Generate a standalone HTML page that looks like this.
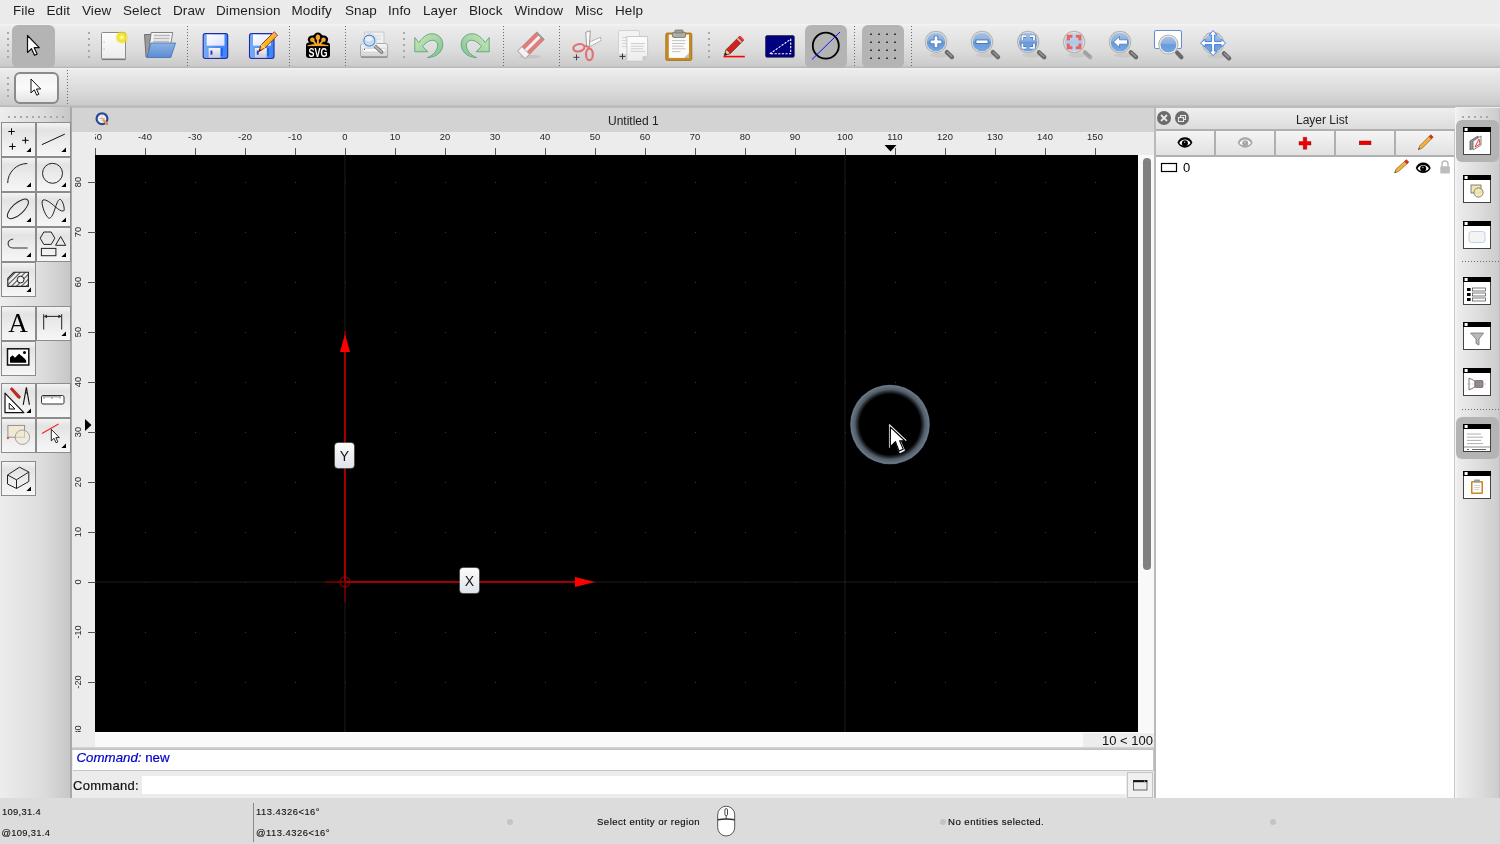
<!DOCTYPE html><html><head><meta charset="utf-8"><style>

*{box-sizing:border-box}
html,body{margin:0;padding:0}
body{width:1500px;height:844px;position:relative;overflow:hidden;background:#ececec;font-family:"Liberation Sans",sans-serif;color:#1d1d1d}
.a{position:absolute}
.t{position:absolute;white-space:nowrap;line-height:1}
svg{position:absolute;overflow:visible}
.sep{position:absolute;width:1px;background:repeating-linear-gradient(#6a6a6a 0 1px,transparent 1px 3px)}
.hdl{position:absolute;width:2px;background:repeating-linear-gradient(#a8a8a8 0 2px,transparent 2px 6px)}
.tb{position:absolute;width:35px;height:35px;border:1px solid #8c8c8c;background:linear-gradient(#f3f3f3 0%,#e3e3e3 22%,#ececec 55%,#f6f6f6 100%)}

</style></head><body><div class="a" style="left:0;top:0;width:1500px;height:844px;overflow:hidden;will-change:transform">
<div class="a" style="left:0;top:0;width:1500px;height:24px;background:#ebebeb"></div>
<div class="t" style="left:13px;top:3.5px;font-size:13.5px;letter-spacing:0.1px;color:#1e1e1e">File</div>
<div class="t" style="left:46.5px;top:3.5px;font-size:13.5px;letter-spacing:0.1px;color:#1e1e1e">Edit</div>
<div class="t" style="left:82px;top:3.5px;font-size:13.5px;letter-spacing:0.1px;color:#1e1e1e">View</div>
<div class="t" style="left:123px;top:3.5px;font-size:13.5px;letter-spacing:0.1px;color:#1e1e1e">Select</div>
<div class="t" style="left:173px;top:3.5px;font-size:13.5px;letter-spacing:0.1px;color:#1e1e1e">Draw</div>
<div class="t" style="left:216px;top:3.5px;font-size:13.5px;letter-spacing:0.1px;color:#1e1e1e">Dimension</div>
<div class="t" style="left:291.5px;top:3.5px;font-size:13.5px;letter-spacing:0.1px;color:#1e1e1e">Modify</div>
<div class="t" style="left:345px;top:3.5px;font-size:13.5px;letter-spacing:0.1px;color:#1e1e1e">Snap</div>
<div class="t" style="left:388px;top:3.5px;font-size:13.5px;letter-spacing:0.1px;color:#1e1e1e">Info</div>
<div class="t" style="left:423px;top:3.5px;font-size:13.5px;letter-spacing:0.1px;color:#1e1e1e">Layer</div>
<div class="t" style="left:469px;top:3.5px;font-size:13.5px;letter-spacing:0.1px;color:#1e1e1e">Block</div>
<div class="t" style="left:514.5px;top:3.5px;font-size:13.5px;letter-spacing:0.1px;color:#1e1e1e">Window</div>
<div class="t" style="left:575px;top:3.5px;font-size:13.5px;letter-spacing:0.1px;color:#1e1e1e">Misc</div>
<div class="t" style="left:615px;top:3.5px;font-size:13.5px;letter-spacing:0.1px;color:#1e1e1e">Help</div>
<div class="a" style="left:0;top:24px;width:1500px;height:44px;background:linear-gradient(#f4f4f4 0px,#ededed 2px,#dcdcdc 26px,#cbcbcb 42px,#b8b8b8 43px,#b8b8b8 44px)"></div>
<div class="a" style="left:0;top:68px;width:1500px;height:39px;background:linear-gradient(#f2f2f2 0px,#ececec 2px,#dbdbdb 22px,#cacaca 37px,#b8b8b8 38px,#b8b8b8 39px)"></div>
<div class="hdl" style="left:7px;top:32px;height:26px"></div>
<div class="hdl" style="left:88px;top:32px;height:26px"></div>
<div class="hdl" style="left:403px;top:32px;height:26px"></div>
<div class="hdl" style="left:708px;top:32px;height:26px"></div>
<div class="hdl" style="left:7px;top:77px;height:21px"></div>
<div class="sep" style="left:187px;top:26px;height:40px"></div>
<div class="sep" style="left:289px;top:26px;height:40px"></div>
<div class="sep" style="left:345px;top:26px;height:40px"></div>
<div class="sep" style="left:503px;top:26px;height:40px"></div>
<div class="sep" style="left:559px;top:26px;height:40px"></div>
<div class="sep" style="left:854px;top:26px;height:40px"></div>
<div class="sep" style="left:911px;top:26px;height:40px"></div>
<div class="sep" style="left:67px;top:70px;height:35px"></div>
<div class="a" style="left:12px;top:25px;width:43px;height:43px;border-radius:6px;background:#b4b4b4"></div>
<div class="a" style="left:805px;top:25px;width:42px;height:43px;border-radius:6px;background:#b4b4b4"></div>
<div class="a" style="left:862px;top:25px;width:42px;height:43px;border-radius:6px;background:#b4b4b4"></div>
<div class="a" style="left:14px;top:72px;width:45px;height:32px;border-radius:6px;border:2px solid #8a8a8a;background:linear-gradient(#f4f4f4,#fafafa 50%,#e4e4e4)"></div>
<div class="a" style="left:0;top:107px;width:71px;height:691px;background:linear-gradient(90deg,#ededed,#dcdcdc 60%,#c6c6c6)"></div>
<div class="a" style="left:70px;top:107px;width:2px;height:691px;background:#a9a9a9"></div>
<div class="a" style="left:8px;top:116px;width:58px;height:2px;background:repeating-linear-gradient(90deg,#a8a8a8 0 2px,transparent 2px 6px)"></div>
<div class="tb" style="left:1px;top:122px"></div>
<div class="tb" style="left:36px;top:122px"></div>
<div class="tb" style="left:1px;top:157px"></div>
<div class="tb" style="left:36px;top:157px"></div>
<div class="tb" style="left:1px;top:192px"></div>
<div class="tb" style="left:36px;top:192px"></div>
<div class="tb" style="left:1px;top:227px"></div>
<div class="tb" style="left:36px;top:227px"></div>
<div class="tb" style="left:1px;top:262px"></div>
<div class="tb" style="left:1px;top:306px"></div>
<div class="tb" style="left:36px;top:306px"></div>
<div class="tb" style="left:1px;top:341px"></div>
<div class="tb" style="left:1px;top:383px"></div>
<div class="tb" style="left:36px;top:383px"></div>
<div class="tb" style="left:1px;top:418px"></div>
<div class="tb" style="left:36px;top:418px"></div>
<div class="tb" style="left:1px;top:461px"></div>
<div class="a" style="left:72px;top:107px;width:1083px;height:1px;background:#bdbdbd"></div>
<div class="a" style="left:72px;top:108px;width:1082px;height:24px;background:#d3d3d3"></div>
<div class="t" style="left:608px;top:115px;font-size:12px;color:#222">Untitled 1</div>
<svg style="left:0;top:0" width="1500" height="844"><circle cx="102" cy="118.7" r="5.4" fill="#f4f4f8" stroke="#2a4a98" stroke-width="2.2"/><path d="M99,118.5h6M102,115.5v6" stroke="#c8a0a0" stroke-width="0.7"/><line x1="103" y1="119.5" x2="106.6" y2="123.4" stroke="#f0a020" stroke-width="2.2"/><line x1="106.6" y1="123.4" x2="107.7" y2="124.6" stroke="#e06060" stroke-width="2.2"/></svg>
<div class="a" style="left:72px;top:132px;width:1082px;height:23px;background:#ececec"></div>
<div class="a" style="left:72px;top:155px;width:23px;height:592px;background:#ececec"></div>
<div class="a" style="left:95px;top:155px;width:1059px;height:592px;background:#f9f9f9"></div>
<div class="a" style="left:95px;top:155px;width:1043px;height:577px;background:#000"></div>
<div class="a" style="left:1143px;top:158px;width:8px;height:412px;border-radius:4px;background:#808080"></div>
<div class="a" style="left:95px;top:132px;width:1059px;height:23px;overflow:hidden"><div class="a" style="left:-95px;top:-132px;width:1500px;height:200px"><div class="a" style="left:95px;top:148px;width:1px;height:7px;background:#555"></div><div class="t" style="left:75px;width:40px;text-align:center;top:132px;font-size:9.4px;letter-spacing:0.15px;color:#222">-50</div><div class="a" style="left:145px;top:148px;width:1px;height:7px;background:#555"></div><div class="t" style="left:125px;width:40px;text-align:center;top:132px;font-size:9.4px;letter-spacing:0.15px;color:#222">-40</div><div class="a" style="left:195px;top:148px;width:1px;height:7px;background:#555"></div><div class="t" style="left:175px;width:40px;text-align:center;top:132px;font-size:9.4px;letter-spacing:0.15px;color:#222">-30</div><div class="a" style="left:245px;top:148px;width:1px;height:7px;background:#555"></div><div class="t" style="left:225px;width:40px;text-align:center;top:132px;font-size:9.4px;letter-spacing:0.15px;color:#222">-20</div><div class="a" style="left:295px;top:148px;width:1px;height:7px;background:#555"></div><div class="t" style="left:275px;width:40px;text-align:center;top:132px;font-size:9.4px;letter-spacing:0.15px;color:#222">-10</div><div class="a" style="left:345px;top:148px;width:1px;height:7px;background:#555"></div><div class="t" style="left:325px;width:40px;text-align:center;top:132px;font-size:9.4px;letter-spacing:0.15px;color:#222">0</div><div class="a" style="left:395px;top:148px;width:1px;height:7px;background:#555"></div><div class="t" style="left:375px;width:40px;text-align:center;top:132px;font-size:9.4px;letter-spacing:0.15px;color:#222">10</div><div class="a" style="left:445px;top:148px;width:1px;height:7px;background:#555"></div><div class="t" style="left:425px;width:40px;text-align:center;top:132px;font-size:9.4px;letter-spacing:0.15px;color:#222">20</div><div class="a" style="left:495px;top:148px;width:1px;height:7px;background:#555"></div><div class="t" style="left:475px;width:40px;text-align:center;top:132px;font-size:9.4px;letter-spacing:0.15px;color:#222">30</div><div class="a" style="left:545px;top:148px;width:1px;height:7px;background:#555"></div><div class="t" style="left:525px;width:40px;text-align:center;top:132px;font-size:9.4px;letter-spacing:0.15px;color:#222">40</div><div class="a" style="left:595px;top:148px;width:1px;height:7px;background:#555"></div><div class="t" style="left:575px;width:40px;text-align:center;top:132px;font-size:9.4px;letter-spacing:0.15px;color:#222">50</div><div class="a" style="left:645px;top:148px;width:1px;height:7px;background:#555"></div><div class="t" style="left:625px;width:40px;text-align:center;top:132px;font-size:9.4px;letter-spacing:0.15px;color:#222">60</div><div class="a" style="left:695px;top:148px;width:1px;height:7px;background:#555"></div><div class="t" style="left:675px;width:40px;text-align:center;top:132px;font-size:9.4px;letter-spacing:0.15px;color:#222">70</div><div class="a" style="left:745px;top:148px;width:1px;height:7px;background:#555"></div><div class="t" style="left:725px;width:40px;text-align:center;top:132px;font-size:9.4px;letter-spacing:0.15px;color:#222">80</div><div class="a" style="left:795px;top:148px;width:1px;height:7px;background:#555"></div><div class="t" style="left:775px;width:40px;text-align:center;top:132px;font-size:9.4px;letter-spacing:0.15px;color:#222">90</div><div class="a" style="left:845px;top:148px;width:1px;height:7px;background:#555"></div><div class="t" style="left:825px;width:40px;text-align:center;top:132px;font-size:9.4px;letter-spacing:0.15px;color:#222">100</div><div class="a" style="left:895px;top:148px;width:1px;height:7px;background:#555"></div><div class="t" style="left:875px;width:40px;text-align:center;top:132px;font-size:9.4px;letter-spacing:0.15px;color:#222">110</div><div class="a" style="left:945px;top:148px;width:1px;height:7px;background:#555"></div><div class="t" style="left:925px;width:40px;text-align:center;top:132px;font-size:9.4px;letter-spacing:0.15px;color:#222">120</div><div class="a" style="left:995px;top:148px;width:1px;height:7px;background:#555"></div><div class="t" style="left:975px;width:40px;text-align:center;top:132px;font-size:9.4px;letter-spacing:0.15px;color:#222">130</div><div class="a" style="left:1045px;top:148px;width:1px;height:7px;background:#555"></div><div class="t" style="left:1025px;width:40px;text-align:center;top:132px;font-size:9.4px;letter-spacing:0.15px;color:#222">140</div><div class="a" style="left:1095px;top:148px;width:1px;height:7px;background:#555"></div><div class="t" style="left:1075px;width:40px;text-align:center;top:132px;font-size:9.4px;letter-spacing:0.15px;color:#222">150</div></div></div>
<div class="a" style="left:72px;top:155px;width:23px;height:577px;overflow:hidden"><div class="a" style="left:-72px;top:-155px;width:200px;height:900px"><div class="a" style="left:88px;top:732px;width:7px;height:1px;background:#555"></div><div class="t" style="left:58.5px;top:727px;width:40px;height:10px;text-align:center;font-size:9.2px;color:#222;transform:rotate(-90deg)">-30</div><div class="a" style="left:88px;top:682px;width:7px;height:1px;background:#555"></div><div class="t" style="left:58.5px;top:677px;width:40px;height:10px;text-align:center;font-size:9.2px;color:#222;transform:rotate(-90deg)">-20</div><div class="a" style="left:88px;top:632px;width:7px;height:1px;background:#555"></div><div class="t" style="left:58.5px;top:627px;width:40px;height:10px;text-align:center;font-size:9.2px;color:#222;transform:rotate(-90deg)">-10</div><div class="a" style="left:88px;top:582px;width:7px;height:1px;background:#555"></div><div class="t" style="left:58.5px;top:577px;width:40px;height:10px;text-align:center;font-size:9.2px;color:#222;transform:rotate(-90deg)">0</div><div class="a" style="left:88px;top:532px;width:7px;height:1px;background:#555"></div><div class="t" style="left:58.5px;top:527px;width:40px;height:10px;text-align:center;font-size:9.2px;color:#222;transform:rotate(-90deg)">10</div><div class="a" style="left:88px;top:482px;width:7px;height:1px;background:#555"></div><div class="t" style="left:58.5px;top:477px;width:40px;height:10px;text-align:center;font-size:9.2px;color:#222;transform:rotate(-90deg)">20</div><div class="a" style="left:88px;top:432px;width:7px;height:1px;background:#555"></div><div class="t" style="left:58.5px;top:427px;width:40px;height:10px;text-align:center;font-size:9.2px;color:#222;transform:rotate(-90deg)">30</div><div class="a" style="left:88px;top:382px;width:7px;height:1px;background:#555"></div><div class="t" style="left:58.5px;top:377px;width:40px;height:10px;text-align:center;font-size:9.2px;color:#222;transform:rotate(-90deg)">40</div><div class="a" style="left:88px;top:332px;width:7px;height:1px;background:#555"></div><div class="t" style="left:58.5px;top:327px;width:40px;height:10px;text-align:center;font-size:9.2px;color:#222;transform:rotate(-90deg)">50</div><div class="a" style="left:88px;top:282px;width:7px;height:1px;background:#555"></div><div class="t" style="left:58.5px;top:277px;width:40px;height:10px;text-align:center;font-size:9.2px;color:#222;transform:rotate(-90deg)">60</div><div class="a" style="left:88px;top:232px;width:7px;height:1px;background:#555"></div><div class="t" style="left:58.5px;top:227px;width:40px;height:10px;text-align:center;font-size:9.2px;color:#222;transform:rotate(-90deg)">70</div><div class="a" style="left:88px;top:182px;width:7px;height:1px;background:#555"></div><div class="t" style="left:58.5px;top:177px;width:40px;height:10px;text-align:center;font-size:9.2px;color:#222;transform:rotate(-90deg)">80</div></div></div>
<svg style="left:0;top:0" width="1500" height="844"><polygon points="884.5,145 896.5,145 890.5,151.5" fill="#000"/><polygon points="85,419 85,431 91.5,425" fill="#000"/></svg>
<svg style="left:95px;top:155px;overflow:hidden" width="1043" height="577" viewBox="95 155 1043 577"><path d="M95,182h1v1h-1zM95,232h1v1h-1zM95,282h1v1h-1zM95,332h1v1h-1zM95,382h1v1h-1zM95,432h1v1h-1zM95,482h1v1h-1zM95,532h1v1h-1zM95,582h1v1h-1zM95,632h1v1h-1zM95,682h1v1h-1zM95,732h1v1h-1zM145,182h1v1h-1zM145,232h1v1h-1zM145,282h1v1h-1zM145,332h1v1h-1zM145,382h1v1h-1zM145,432h1v1h-1zM145,482h1v1h-1zM145,532h1v1h-1zM145,582h1v1h-1zM145,632h1v1h-1zM145,682h1v1h-1zM145,732h1v1h-1zM195,182h1v1h-1zM195,232h1v1h-1zM195,282h1v1h-1zM195,332h1v1h-1zM195,382h1v1h-1zM195,432h1v1h-1zM195,482h1v1h-1zM195,532h1v1h-1zM195,582h1v1h-1zM195,632h1v1h-1zM195,682h1v1h-1zM195,732h1v1h-1zM245,182h1v1h-1zM245,232h1v1h-1zM245,282h1v1h-1zM245,332h1v1h-1zM245,382h1v1h-1zM245,432h1v1h-1zM245,482h1v1h-1zM245,532h1v1h-1zM245,582h1v1h-1zM245,632h1v1h-1zM245,682h1v1h-1zM245,732h1v1h-1zM295,182h1v1h-1zM295,232h1v1h-1zM295,282h1v1h-1zM295,332h1v1h-1zM295,382h1v1h-1zM295,432h1v1h-1zM295,482h1v1h-1zM295,532h1v1h-1zM295,582h1v1h-1zM295,632h1v1h-1zM295,682h1v1h-1zM295,732h1v1h-1zM345,182h1v1h-1zM345,232h1v1h-1zM345,282h1v1h-1zM345,332h1v1h-1zM345,382h1v1h-1zM345,432h1v1h-1zM345,482h1v1h-1zM345,532h1v1h-1zM345,582h1v1h-1zM345,632h1v1h-1zM345,682h1v1h-1zM345,732h1v1h-1zM395,182h1v1h-1zM395,232h1v1h-1zM395,282h1v1h-1zM395,332h1v1h-1zM395,382h1v1h-1zM395,432h1v1h-1zM395,482h1v1h-1zM395,532h1v1h-1zM395,582h1v1h-1zM395,632h1v1h-1zM395,682h1v1h-1zM395,732h1v1h-1zM445,182h1v1h-1zM445,232h1v1h-1zM445,282h1v1h-1zM445,332h1v1h-1zM445,382h1v1h-1zM445,432h1v1h-1zM445,482h1v1h-1zM445,532h1v1h-1zM445,582h1v1h-1zM445,632h1v1h-1zM445,682h1v1h-1zM445,732h1v1h-1zM495,182h1v1h-1zM495,232h1v1h-1zM495,282h1v1h-1zM495,332h1v1h-1zM495,382h1v1h-1zM495,432h1v1h-1zM495,482h1v1h-1zM495,532h1v1h-1zM495,582h1v1h-1zM495,632h1v1h-1zM495,682h1v1h-1zM495,732h1v1h-1zM545,182h1v1h-1zM545,232h1v1h-1zM545,282h1v1h-1zM545,332h1v1h-1zM545,382h1v1h-1zM545,432h1v1h-1zM545,482h1v1h-1zM545,532h1v1h-1zM545,582h1v1h-1zM545,632h1v1h-1zM545,682h1v1h-1zM545,732h1v1h-1zM595,182h1v1h-1zM595,232h1v1h-1zM595,282h1v1h-1zM595,332h1v1h-1zM595,382h1v1h-1zM595,432h1v1h-1zM595,482h1v1h-1zM595,532h1v1h-1zM595,582h1v1h-1zM595,632h1v1h-1zM595,682h1v1h-1zM595,732h1v1h-1zM645,182h1v1h-1zM645,232h1v1h-1zM645,282h1v1h-1zM645,332h1v1h-1zM645,382h1v1h-1zM645,432h1v1h-1zM645,482h1v1h-1zM645,532h1v1h-1zM645,582h1v1h-1zM645,632h1v1h-1zM645,682h1v1h-1zM645,732h1v1h-1zM695,182h1v1h-1zM695,232h1v1h-1zM695,282h1v1h-1zM695,332h1v1h-1zM695,382h1v1h-1zM695,432h1v1h-1zM695,482h1v1h-1zM695,532h1v1h-1zM695,582h1v1h-1zM695,632h1v1h-1zM695,682h1v1h-1zM695,732h1v1h-1zM745,182h1v1h-1zM745,232h1v1h-1zM745,282h1v1h-1zM745,332h1v1h-1zM745,382h1v1h-1zM745,432h1v1h-1zM745,482h1v1h-1zM745,532h1v1h-1zM745,582h1v1h-1zM745,632h1v1h-1zM745,682h1v1h-1zM745,732h1v1h-1zM795,182h1v1h-1zM795,232h1v1h-1zM795,282h1v1h-1zM795,332h1v1h-1zM795,382h1v1h-1zM795,432h1v1h-1zM795,482h1v1h-1zM795,532h1v1h-1zM795,582h1v1h-1zM795,632h1v1h-1zM795,682h1v1h-1zM795,732h1v1h-1zM845,182h1v1h-1zM845,232h1v1h-1zM845,282h1v1h-1zM845,332h1v1h-1zM845,382h1v1h-1zM845,432h1v1h-1zM845,482h1v1h-1zM845,532h1v1h-1zM845,582h1v1h-1zM845,632h1v1h-1zM845,682h1v1h-1zM845,732h1v1h-1zM895,182h1v1h-1zM895,232h1v1h-1zM895,282h1v1h-1zM895,332h1v1h-1zM895,382h1v1h-1zM895,432h1v1h-1zM895,482h1v1h-1zM895,532h1v1h-1zM895,582h1v1h-1zM895,632h1v1h-1zM895,682h1v1h-1zM895,732h1v1h-1zM945,182h1v1h-1zM945,232h1v1h-1zM945,282h1v1h-1zM945,332h1v1h-1zM945,382h1v1h-1zM945,432h1v1h-1zM945,482h1v1h-1zM945,532h1v1h-1zM945,582h1v1h-1zM945,632h1v1h-1zM945,682h1v1h-1zM945,732h1v1h-1zM995,182h1v1h-1zM995,232h1v1h-1zM995,282h1v1h-1zM995,332h1v1h-1zM995,382h1v1h-1zM995,432h1v1h-1zM995,482h1v1h-1zM995,532h1v1h-1zM995,582h1v1h-1zM995,632h1v1h-1zM995,682h1v1h-1zM995,732h1v1h-1zM1045,182h1v1h-1zM1045,232h1v1h-1zM1045,282h1v1h-1zM1045,332h1v1h-1zM1045,382h1v1h-1zM1045,432h1v1h-1zM1045,482h1v1h-1zM1045,532h1v1h-1zM1045,582h1v1h-1zM1045,632h1v1h-1zM1045,682h1v1h-1zM1045,732h1v1h-1zM1095,182h1v1h-1zM1095,232h1v1h-1zM1095,282h1v1h-1zM1095,332h1v1h-1zM1095,382h1v1h-1zM1095,432h1v1h-1zM1095,482h1v1h-1zM1095,532h1v1h-1zM1095,582h1v1h-1zM1095,632h1v1h-1zM1095,682h1v1h-1zM1095,732h1v1h-1z" fill="#3a3a3a"/><rect x="344.5" y="155" width="1" height="577" fill="#1c1c1c"/><rect x="844.5" y="155" width="1" height="577" fill="#1c1c1c"/><rect x="95" y="581.5" width="1043" height="1" fill="#1c1c1c"/><line x1="345" y1="582" x2="345" y2="352" stroke="#a00000" stroke-width="2"/><line x1="345" y1="331" x2="345" y2="345" stroke="#700000" stroke-width="2"/><line x1="345" y1="582" x2="345" y2="602" stroke="#600000" stroke-width="2"/><line x1="345" y1="582" x2="575" y2="582" stroke="#a00000" stroke-width="2"/><line x1="325" y1="582" x2="345" y2="582" stroke="#600000" stroke-width="2"/><polygon points="340,352 350,352 345,334" fill="#ff0000"/><polygon points="575,577 575,587 595,582" fill="#ff0000"/><circle cx="345" cy="582" r="5" fill="none" stroke="#b00000" stroke-width="1"/></svg>
<div class="a" style="left:335px;top:443px;width:19px;height:25px;border-radius:3px;background:linear-gradient(#fbfbfb,#dfe4ea);box-shadow:0 0 0 0.5px #999"></div>
<div class="t" style="left:335px;top:449px;width:19px;text-align:center;font-size:14px;color:#111">Y</div>
<div class="a" style="left:460px;top:568px;width:19px;height:25px;border-radius:3px;background:linear-gradient(#fbfbfb,#dfe4ea);box-shadow:0 0 0 0.5px #999"></div>
<div class="t" style="left:460px;top:574px;width:19px;text-align:center;font-size:14px;color:#111">X</div>
<svg style="left:0;top:0" width="1500" height="844"><defs><radialGradient id="gRing" cx="890" cy="424.5" r="39.8" gradientUnits="userSpaceOnUse"><stop offset="0" stop-color="#000" stop-opacity="0"/><stop offset="0.76" stop-color="#56636f" stop-opacity="0"/><stop offset="0.83" stop-color="#56636f" stop-opacity="0.5"/><stop offset="0.88" stop-color="#5a6774" stop-opacity="0.9"/><stop offset="0.92" stop-color="#5e6c79" stop-opacity="0.95"/><stop offset="0.975" stop-color="#6a7987"/><stop offset="1" stop-color="#5a6774"/></radialGradient></defs><circle cx="890" cy="424.5" r="39.8" fill="url(#gRing)"/><path d="M889.40,424.30 L889.40,447.50 L895.50,441.60 L899.80,452.90 L904.70,450.60 L900.40,440.70 L906.30,440.30 Z" fill="#fff" stroke="#fff" stroke-width="0.6" stroke-linejoin="round"/><path d="M890.38,427.05 L890.38,446.54 L895.50,441.58 L899.11,451.08 L903.23,449.14 L899.62,440.83 L904.57,440.49 Z" fill="#fff" stroke="#000" stroke-width="1.1" stroke-linejoin="round"/></svg>
<div class="a" style="left:95px;top:732px;width:1059px;height:1px;background:#fdfdfd"></div>
<div class="a" style="left:1083px;top:733px;width:71px;height:14px;background:#ececec"></div>
<div class="t" style="left:1102px;top:734px;font-size:13px;color:#111">10 &lt; 100</div>
<div class="a" style="left:72px;top:747px;width:1082px;height:3px;background:linear-gradient(#d6d6d6,#bdbdbd)"></div>
<div class="a" style="left:73px;top:750px;width:1081px;height:21px;background:#fff;border-bottom:1px solid #c4c4c4;border-right:1px solid #c8c8c8"></div>
<div class="t" style="left:76.5px;top:751px;font-size:13.3px;-webkit-text-stroke:0.2px #0000c8;color:#0000c8"><i>Command:</i> new</div>
<div class="a" style="left:72px;top:771px;width:1082px;height:27px;background:#ececec"></div>
<div class="t" style="left:73px;top:779px;font-size:13px;letter-spacing:0.3px;-webkit-text-stroke:0.2px #111;color:#111">Command:</div>
<div class="a" style="left:142px;top:776px;width:984px;height:18px;background:#fff"></div>
<div class="a" style="left:1127px;top:772px;width:26px;height:26px;background:#f0f0f0;border:1px solid #c4c4c4"></div>
<svg style="left:0;top:0" width="1500" height="844"><rect x="1133.5" y="780.5" width="13.5" height="9.5" fill="#ececec" stroke="#444" stroke-width="0.8"/><rect x="1133.2" y="780.2" width="14.1" height="2" fill="#111"/><rect x="1144" y="780.8" width="1" height="0.9" fill="#ccc"/></svg>
<div class="a" style="left:1154px;top:107px;width:2px;height:691px;background:#bababa"></div>
<div class="a" style="left:1156px;top:107px;width:299px;height:23px;background:linear-gradient(#efefef,#dcdcdc)"></div>
<div class="a" style="left:1156px;top:106px;width:299px;height:2px;background:#bcbcbc"></div>
<div class="t" style="left:1296px;top:114px;font-size:12px;color:#222">Layer List</div>
<svg style="left:0;top:0" width="1500" height="844"><circle cx="1164" cy="118" r="7" fill="#6b6b6b"/><path d="M1161,115 l6,6 M1167,115 l-6,6" stroke="#e8e8e8" stroke-width="1.8"/><circle cx="1182" cy="118" r="7" fill="#6b6b6b"/><rect x="1178.5" y="117.5" width="5" height="4" fill="none" stroke="#e8e8e8" stroke-width="1.1"/><path d="M1180.5,117.5 v-2 h5 v4 h-2" fill="none" stroke="#e8e8e8" stroke-width="1.1"/></svg>
<div class="a" style="left:1156px;top:128.5px;width:299px;height:28.5px;background:#b0b0b0"></div>
<div class="a" style="left:1156px;top:131px;width:58px;height:24px;background:linear-gradient(#f4f4f4,#e2e2e2)"></div>
<div class="a" style="left:1216px;top:131px;width:58px;height:24px;background:linear-gradient(#f4f4f4,#e2e2e2)"></div>
<div class="a" style="left:1276px;top:131px;width:58px;height:24px;background:linear-gradient(#f4f4f4,#e2e2e2)"></div>
<div class="a" style="left:1336px;top:131px;width:58px;height:24px;background:linear-gradient(#f4f4f4,#e2e2e2)"></div>
<div class="a" style="left:1396px;top:131px;width:58px;height:24px;background:linear-gradient(#f4f4f4,#e2e2e2)"></div>
<div class="a" style="left:1156px;top:157px;width:298px;height:641px;background:#fff"></div>
<div class="a" style="left:1454px;top:130px;width:1px;height:668px;background:#c8c8c8"></div>
<div class="t" style="left:1183px;top:161px;font-size:13px;color:#000">0</div>
<svg style="left:0;top:0" width="1500" height="844"><rect x="1161.5" y="163.5" width="15" height="8" fill="#fff" stroke="#000" stroke-width="1.2"/></svg>
<div class="a" style="left:1455px;top:107.5px;width:45px;height:690.5px;background:linear-gradient(90deg,#f6f6f6 0px,#ececec 3px,#dedede 50%,#cdcdcd 96%,#bdbdbd 100%)"></div>
<div class="a" style="left:1462px;top:116px;width:30px;height:2px;background:repeating-linear-gradient(90deg,#a8a8a8 0 2px,transparent 2px 6px)"></div>
<div class="a" style="left:1456px;top:120px;width:42.5px;height:42px;border-radius:6px;background:#b4b4b4"></div>
<div class="a" style="left:1456px;top:417px;width:42.5px;height:42px;border-radius:6px;background:#b4b4b4"></div>
<div class="sep" style="left:1462px;top:261px;width:38px;height:1px;background:repeating-linear-gradient(90deg,#6a6a6a 0 1px,transparent 1px 3px)"></div>
<div class="sep" style="left:1462px;top:409px;width:38px;height:1px;background:repeating-linear-gradient(90deg,#6a6a6a 0 1px,transparent 1px 3px)"></div>
<div class="a" style="left:0;top:798px;width:1500px;height:46px;background:#dcdcdc"></div>
<div class="t" style="left:2px;top:806.8px;font-size:9.4px;letter-spacing:0.3px;-webkit-text-stroke:0.12px #111;color:#111">109,31.4</div>
<div class="t" style="left:1.5px;top:827.5px;font-size:9.4px;letter-spacing:0.3px;-webkit-text-stroke:0.12px #111;color:#111">@109,31.4</div>
<div class="a" style="left:253px;top:803px;width:1px;height:39px;background:#8a8a8a"></div>
<div class="t" style="left:256px;top:806.8px;font-size:9.4px;letter-spacing:0.5px;-webkit-text-stroke:0.12px #111;color:#111">113.4326&lt;16°</div>
<div class="t" style="left:256px;top:827.5px;font-size:9.4px;letter-spacing:0.5px;-webkit-text-stroke:0.12px #111;color:#111">@113.4326&lt;16°</div>
<div class="t" style="left:597px;top:817px;font-size:9.6px;letter-spacing:0.45px;-webkit-text-stroke:0.15px #111;color:#111">Select entity or region</div>
<div class="t" style="left:948px;top:817px;font-size:9.6px;letter-spacing:0.47px;-webkit-text-stroke:0.15px #111;color:#111">No entities selected.</div>
<div class="a" style="left:506.5px;top:819px;width:6px;height:6px;border-radius:3px;background:#c4c4c4"></div>
<div class="a" style="left:940px;top:819px;width:6px;height:6px;border-radius:3px;background:#c4c4c4"></div>
<div class="a" style="left:1269.5px;top:819px;width:6px;height:6px;border-radius:3px;background:#c4c4c4"></div>
<svg style="left:0;top:0" width="1500" height="844"><rect x="717.7" y="806.2" width="17" height="29.8" rx="8.5" fill="#fff" stroke="#444" stroke-width="0.9"/><path d="M717.7,819.8 Q726.2,818.2 734.7,819.8" fill="none" stroke="#333" stroke-width="1.4"/><rect x="724.9" y="808.6" width="2.6" height="7" rx="1.3" fill="#fff" stroke="#333" stroke-width="0.9"/><path d="M726.2,815.6 V819" stroke="#333" stroke-width="0.9"/></svg>
<svg style="left:0;top:0" width="1500" height="844"><defs>
<linearGradient id="gPaper" x1="0" y1="0" x2="0" y2="1"><stop offset="0" stop-color="#fdfdfd"/><stop offset="1" stop-color="#ececec"/></linearGradient>
<radialGradient id="gGlow"><stop offset="0" stop-color="#ffffff"/><stop offset="0.25" stop-color="#f8f060"/><stop offset="0.55" stop-color="#f0e020"/><stop offset="1" stop-color="#f0e020" stop-opacity="0"/></radialGradient>
<linearGradient id="gFolder" x1="0" y1="0" x2="0" y2="1"><stop offset="0" stop-color="#8fb4e4"/><stop offset="1" stop-color="#5a8cd0"/></linearGradient>
<linearGradient id="gFloppy" x1="0" y1="0" x2="1" y2="0"><stop offset="0" stop-color="#7ab0f8"/><stop offset="0.5" stop-color="#4a8cf0"/><stop offset="1" stop-color="#3a86ff"/></linearGradient>
<linearGradient id="gLabel" x1="0" y1="0" x2="1" y2="1"><stop offset="0" stop-color="#ffffff"/><stop offset="1" stop-color="#dde0f8"/></linearGradient>
<linearGradient id="gShutter" x1="0" y1="0" x2="0" y2="1"><stop offset="0" stop-color="#f4f4f4"/><stop offset="1" stop-color="#c8c8d8"/></linearGradient>
<linearGradient id="gUndo" x1="0" y1="0" x2="1" y2="1"><stop offset="0" stop-color="#cfe8b8"/><stop offset="1" stop-color="#7cc394"/></linearGradient>
<linearGradient id="gPrinter" x1="0" y1="0" x2="0" y2="1"><stop offset="0" stop-color="#f8f8f8"/><stop offset="1" stop-color="#cfcfcf"/></linearGradient>
<radialGradient id="gLens" cx="0.5" cy="0.75" r="0.7"><stop offset="0" stop-color="#8cbcf0"/><stop offset="0.5" stop-color="#6a9ad8"/><stop offset="1" stop-color="#5a88c8"/></radialGradient>
<linearGradient id="gLensTop" x1="0" y1="0" x2="0" y2="1"><stop offset="0" stop-color="#a8c4e8"/><stop offset="0.45" stop-color="#88acdc"/><stop offset="0.5" stop-color="#6a9ad6"/><stop offset="1" stop-color="#72a8e8"/></linearGradient>
<linearGradient id="gLensPale" x1="0" y1="0" x2="0" y2="1"><stop offset="0" stop-color="#c8d8ec"/><stop offset="0.5" stop-color="#b0c8e4"/><stop offset="1" stop-color="#c0d6f0"/></linearGradient>
<linearGradient id="gBtn" x1="0" y1="0" x2="0" y2="1"><stop offset="0" stop-color="#f4f4f4"/><stop offset="0.3" stop-color="#e6e6e6"/><stop offset="1" stop-color="#f3f3f3"/></linearGradient>
<pattern id="hatch" width="3.5" height="3.5" patternUnits="userSpaceOnUse" patternTransform="rotate(45)"><rect width="3.5" height="3.5" fill="#f2f2f2"/><rect width="1" height="3.5" fill="#444"/></pattern>
</defs><path d="M27.50,35.50 L27.50,52.50 L31.50,48.70 L34.50,55.30 L37.10,54.10 L34.20,47.70 L39.30,47.70 Z" fill="#fff" stroke="#111" stroke-width="1.2" stroke-linejoin="round"/><rect x="101.5" y="32.5" width="24" height="27" rx="1" fill="url(#gPaper)" stroke="#8a8a8a" stroke-width="1"/><rect x="102" y="58.5" width="23.5" height="1.6" fill="#7a7a7a"/><circle cx="121.8" cy="37.4" r="7" fill="url(#gGlow)"/><path d="M103.5,42h1.3M103.5,49h1.3" stroke="#aaa" stroke-width="0.8"/><path d="M144.5,34.5 L151,34.5 L148,57 L146,57 Z" fill="#9a9a9a" stroke="#666" stroke-width="0.9"/><path d="M151.2,32.5 L172.8,32.5 L170.5,45 L148,57 Z" fill="#f4f4f4" stroke="#777" stroke-width="0.9"/><path d="M154,35.5h16M153.5,38.5h16M153,41.5h16" stroke="#b8b8b8" stroke-width="1.6"/><path d="M151,43 L175.5,43 L170.8,57.5 L147,57.5 Z" fill="url(#gFolder)" stroke="#4a78c0" stroke-width="0.9" stroke-linejoin="round"/><rect x="203.2" y="33.5" width="24.5" height="25" rx="2.2" fill="url(#gFloppy)" stroke="#28289a" stroke-width="1.1"/><rect x="206.7" y="34.5" width="17.8" height="11.2" fill="url(#gLabel)"/><rect x="208.6" y="48" width="11.8" height="9.8" fill="url(#gShutter)"/><rect x="210.5" y="50.6" width="1.9" height="4.1" fill="#1a3ad8"/><rect x="220.89999999999998" y="48" width="1.7" height="8" fill="#1e5ae8"/><rect x="249.5" y="33.5" width="24.5" height="25" rx="2.2" fill="url(#gFloppy)" stroke="#28289a" stroke-width="1.1"/><rect x="253" y="34.5" width="17.8" height="11.2" fill="url(#gLabel)"/><rect x="254.9" y="48" width="11.8" height="9.8" fill="url(#gShutter)"/><rect x="256.8" y="50.6" width="1.9" height="4.1" fill="#1a3ad8"/><rect x="267.2" y="48" width="1.7" height="8" fill="#1e5ae8"/><path d="M258.8,51.6 L261.2,44.8 L274.2,31.8 L277.6,35.2 L264.6,48.2 Z" fill="#f8b820" stroke="#9a2a10" stroke-width="0.9" stroke-linejoin="round"/><path d="M261.2,44.8 L264.6,48.2" stroke="#f0e0c0" stroke-width="1.2"/><path d="M258.8,51.6 L259.8,48.8 L261.5,50.6 Z" fill="#222"/><path d="M273,33 L276.4,36.4" stroke="#f0a0a0" stroke-width="1.5"/><rect x="306" y="42.5" width="24" height="15.5" rx="3" fill="#000"/><path d="M309,44 L312,36 L318,33 L324,36 L327,44 Z" fill="#000"/><circle cx="317.9" cy="36.8" r="4.2" fill="#000"/><circle cx="312" cy="39.6" r="4.2" fill="#000"/><circle cx="323.9" cy="39.6" r="4.2" fill="#000"/><ellipse cx="317.9" cy="37.2" rx="2.2" ry="2.8" fill="#f6a628"/><circle cx="312.4" cy="39.8" r="2.3" fill="#f6a628"/><circle cx="323.5" cy="39.8" r="2.3" fill="#f6a628"/><path d="M317.9,38 V45 M312.6,40 L316.2,44.6 M323.3,40 L319.6,44.6" stroke="#f6a628" stroke-width="1.9"/><path d="M307.8,45.6 Q318,43 328.2,45.6 Z" fill="#f6a628" stroke="#f6a628" stroke-width="1"/><text x="308.5" y="57" font-family="Liberation Sans" font-weight="bold" font-size="13.5" fill="#fff" textLength="19" lengthAdjust="spacingAndGlyphs">SVG</text><rect x="364.5" y="32" width="19.5" height="14" rx="1" fill="#f0f0f0" stroke="#c4c4c4" stroke-width="0.9"/><path d="M367,36h14M367,39h14" stroke="#d8d8d8" stroke-width="1.2"/><rect x="360.5" y="43.5" width="27.2" height="14" rx="2.5" fill="url(#gPrinter)" stroke="#a8a8a8" stroke-width="1"/><rect x="362.5" y="48.5" width="23" height="3.5" rx="1" fill="#fafafa" stroke="#c8c8c8" stroke-width="0.6"/><circle cx="364.5" cy="49.4" r="0.6" fill="#555"/><rect x="361" y="56" width="26.5" height="2" fill="#8a8a8a" opacity="0.7"/><line x1="374.8" y1="46" x2="381.6" y2="52" stroke="#6a6a6a" stroke-width="3.6" stroke-linecap="round"/><line x1="374.8" y1="46" x2="381.6" y2="52" stroke="#b4b4b4" stroke-width="1.8" stroke-linecap="round"/><circle cx="369.4" cy="40.7" r="7.2" fill="#fafafa" stroke="#cfcfcf" stroke-width="0.8"/><circle cx="369.4" cy="40.7" r="5.6" fill="#c8dcf0" stroke="#4a86d0" stroke-width="1.1"/><ellipse cx="368.8" cy="38.8" rx="3.8" ry="2.4" fill="#e8f0fa"/><path d="M414.8,37.5 L418.7,42.5 C422,38.5 426,33.8 432,33.8 C438.5,33.8 442.8,38.5 442.8,44.5 C442.8,52 436,57.5 427.4,57.6 C434,55 437.7,50 437.7,45 C437.7,42 435.5,40.3 432.4,40.3 C429,40.3 425.5,43 422.6,46.4 L427.9,51.8 L414.8,51.8 Z" fill="url(#gUndo)" stroke="#5ea37a" stroke-width="0.9" stroke-linejoin="round"/><g transform="translate(904,0) scale(-1,1)"><path d="M414.8,37.5 L418.7,42.5 C422,38.5 426,33.8 432,33.8 C438.5,33.8 442.8,38.5 442.8,44.5 C442.8,52 436,57.5 427.4,57.6 C434,55 437.7,50 437.7,45 C437.7,42 435.5,40.3 432.4,40.3 C429,40.3 425.5,43 422.6,46.4 L427.9,51.8 L414.8,51.8 Z" fill="url(#gUndo)" stroke="#5ea37a" stroke-width="0.9" stroke-linejoin="round"/></g><ellipse cx="530" cy="56.5" rx="11" ry="1.8" fill="#000" opacity="0.08"/><g transform="translate(531,45.2) rotate(-45)"><rect x="-13.5" y="-5.3" width="27" height="10.6" rx="1" fill="#e27c7c" stroke="#b06060" stroke-width="0.6"/><rect x="-13.5" y="-1.5" width="27" height="3" fill="#f0f0f0"/><rect x="-13.5" y="-5.3" width="6" height="10.6" fill="#f2f2f2" stroke="#999" stroke-width="0.6"/><rect x="12" y="-5.3" width="1.6" height="10.6" fill="#999"/></g><path d="M585.8,32.2 L590.3,30.8 L589.2,46.6 L586.6,46.6 Z" fill="#fafafa" stroke="#888" stroke-width="0.8"/><path d="M589.6,42 L600.7,37.2 L600.9,40.6 L589.6,46.8 Z" fill="#fafafa" stroke="#888" stroke-width="0.8" stroke-dasharray="1.5 0.6"/><ellipse cx="578.9" cy="47.8" rx="5.6" ry="3.6" transform="rotate(-12 578.9 47.8)" fill="none" stroke="#e07272" stroke-width="2.2"/><path d="M584,46 L588,46.5" stroke="#e07272" stroke-width="2.2"/><ellipse cx="589.4" cy="54.4" rx="3.4" ry="5.8" fill="none" stroke="#e07272" stroke-width="2.2"/><path d="M588.6,46.5 L589,49" stroke="#e07272" stroke-width="2.2"/><path d="M573.5,57.3h6M576.5,54.3v6" stroke="#444" stroke-width="1"/><rect x="618.5" y="30.5" width="21" height="24" rx="1.5" fill="#f3f3f3" stroke="#cfcfcf" stroke-width="0.9"/><path d="M622,37.5h10M622,40.5h10M622,43.5h10M622,46.5h10" stroke="#d6d6d6" stroke-width="1"/><path d="M626.8,36.5 h20.8 v19.8 l-5,5 h-15.8 Z" fill="url(#gPaper)" stroke="#c4c4c4" stroke-width="0.9"/><path d="M642.6,61.3 l0,-5 h5 Z" fill="#c8c8c8"/><path d="M631,43.5h14M631,46.2h13M631,48.8h12M631,51.4h14" stroke="#cfcfcf" stroke-width="1"/><path d="M619.5,56.4h6M622.5,53.4v6" stroke="#333" stroke-width="1"/><rect x="665.8" y="33" width="26" height="27.4" rx="1.5" fill="#c98a22" stroke="#9a6a1a" stroke-width="0.8"/><rect x="668.8" y="34.6" width="20.2" height="23.3" fill="#fbfbfb"/><path d="M684,57.9 l5,-5 v5 Z" fill="#bdbdbd"/><rect x="672.4" y="32.2" width="13.2" height="5.2" rx="1.5" fill="#b0b0a4" stroke="#6a6a60" stroke-width="0.8"/><rect x="675" y="30" width="8" height="3" rx="0.8" fill="#a0a094" stroke="#6a6a60" stroke-width="0.7"/><path d="M672,40.6h13.5M672,43.5h13M672,46.2h11.5M672,48.8h13.5M672,51.6h8.5" stroke="#c4c4c4" stroke-width="1"/><path d="M723.5,56.6 L744.8,56.6" stroke="#ff0000" stroke-width="1.6"/><path d="M724.4,55.4 L726.4,49.4 L739.6,36.2 L743.6,40.2 L730.4,53.4 Z" fill="#d42020" stroke="#6a3a10" stroke-width="0.9" stroke-linejoin="round"/><path d="M726.4,49.4 L730.4,53.4 L724.4,55.4 Z" fill="#f0c8a0" stroke="#6a3a10" stroke-width="0.7"/><path d="M724.4,55.4 L725.3,52.6 L727.2,54.5 Z" fill="#111"/><path d="M737.4,38.4 L741.4,42.4" stroke="#c8c8c8" stroke-width="1.5"/><path d="M739.8,36.4 L743.4,40" stroke="#ff4040" stroke-width="1.8"/><rect x="765.8" y="35.8" width="28.3" height="21.3" rx="1" fill="#000080" stroke="#101040" stroke-width="1"/><path d="M769.8,53.8 L790.7,39.2 L790.7,53.8 Z" fill="none" stroke="#fff" stroke-width="1.1" stroke-dasharray="2.2 1.4"/><circle cx="825.8" cy="45.7" r="13" fill="none" stroke="#000" stroke-width="1.8"/><line x1="812" y1="59.5" x2="840" y2="32" stroke="#1010ff" stroke-width="1"/><path d="M870.3,33.5h1.4v1.4h-1.4zM870.3,41.5h1.4v1.4h-1.4zM870.3,49.5h1.4v1.4h-1.4zM870.3,57.5h1.4v1.4h-1.4zM878.3,33.5h1.4v1.4h-1.4zM878.3,41.5h1.4v1.4h-1.4zM878.3,49.5h1.4v1.4h-1.4zM878.3,57.5h1.4v1.4h-1.4zM886.3,33.5h1.4v1.4h-1.4zM886.3,41.5h1.4v1.4h-1.4zM886.3,49.5h1.4v1.4h-1.4zM886.3,57.5h1.4v1.4h-1.4zM894.3,33.5h1.4v1.4h-1.4zM894.3,41.5h1.4v1.4h-1.4zM894.3,49.5h1.4v1.4h-1.4zM894.3,57.5h1.4v1.4h-1.4z" fill="#000"/><ellipse cx="940" cy="54.9" rx="10" ry="2.5" fill="#000" opacity="0.06"/><line x1="946.8" y1="52.2" x2="952" y2="57.099999999999994" stroke="#6a6a6a" stroke-width="4.4" stroke-linecap="round"/><line x1="947.2" y1="52.099999999999994" x2="951.6" y2="56.3" stroke="#9a9a9a" stroke-width="1.2" stroke-linecap="round"/><circle cx="936" cy="41.9" r="10.6" fill="#f4f4ee" stroke="#b8b8b0" stroke-width="1.3"/><circle cx="936" cy="41.9" r="9.4" fill="url(#gLensTop)"/><path d="M930.2,40.1 h4 v-4 h3.6 v4 h4 v3.6 h-4 v4 h-3.6 v-4 h-4 Z" fill="#fff" stroke="#2a5aa8" stroke-width="0.7"/><ellipse cx="986" cy="54.9" rx="10" ry="2.5" fill="#000" opacity="0.06"/><line x1="992.8" y1="52.2" x2="998" y2="57.099999999999994" stroke="#6a6a6a" stroke-width="4.4" stroke-linecap="round"/><line x1="993.2" y1="52.099999999999994" x2="997.6" y2="56.3" stroke="#9a9a9a" stroke-width="1.2" stroke-linecap="round"/><circle cx="982" cy="41.9" r="10.6" fill="#f4f4ee" stroke="#b8b8b0" stroke-width="1.3"/><circle cx="982" cy="41.9" r="9.4" fill="url(#gLensTop)"/><rect x="976" y="40" width="12" height="3.4" fill="#fff" stroke="#2a5aa8" stroke-width="0.7"/><ellipse cx="1032.2" cy="55" rx="10" ry="2.5" fill="#000" opacity="0.06"/><line x1="1039.0" y1="52.3" x2="1044.2" y2="57.2" stroke="#6a6a6a" stroke-width="4.4" stroke-linecap="round"/><line x1="1039.4" y1="52.2" x2="1043.8" y2="56.4" stroke="#9a9a9a" stroke-width="1.2" stroke-linecap="round"/><circle cx="1028.2" cy="42" r="10.6" fill="#f4f4ee" stroke="#b8b8b0" stroke-width="1.3"/><circle cx="1028.2" cy="42" r="9.4" fill="url(#gLensTop)"/><path d="M1022.4000000000001,40.2 V36.2 H1026.4 M1022.4000000000001,43.8 V47.8 H1026.4 M1034.0,40.2 V36.2 H1030.0 M1034.0,43.8 V47.8 H1030.0 " fill="none" stroke="#3a6ab8" stroke-width="3"/><path d="M1022.4000000000001,40.2 V36.2 H1026.4 M1022.4000000000001,43.8 V47.8 H1026.4 M1034.0,40.2 V36.2 H1030.0 M1034.0,43.8 V47.8 H1030.0 " fill="none" stroke="#fff" stroke-width="1.8"/><ellipse cx="1078.1" cy="55" rx="10" ry="2.5" fill="#000" opacity="0.06"/><line x1="1084.8999999999999" y1="52.3" x2="1090.1" y2="57.2" stroke="#a8a8a8" stroke-width="4.4" stroke-linecap="round"/><line x1="1085.3" y1="52.2" x2="1089.6999999999998" y2="56.4" stroke="#9a9a9a" stroke-width="1.2" stroke-linecap="round"/><circle cx="1074.1" cy="42" r="10.6" fill="#f4f4ee" stroke="#b8b8b0" stroke-width="1.3"/><circle cx="1074.1" cy="42" r="9.4" fill="url(#gLensPale)"/><path d="M1068.3,40.2 V36.2 H1072.3 M1068.3,43.8 V47.8 H1072.3 M1079.8999999999999,40.2 V36.2 H1075.8999999999999 M1079.8999999999999,43.8 V47.8 H1075.8999999999999 " fill="none" stroke="#f06060" stroke-width="3"/><path d="M1068.3,40.2 V36.2 H1072.3 M1068.3,43.8 V47.8 H1072.3 M1079.8999999999999,40.2 V36.2 H1075.8999999999999 M1079.8999999999999,43.8 V47.8 H1075.8999999999999 " fill="none" stroke="#f06060" stroke-width="1.8"/><ellipse cx="1124" cy="55" rx="10" ry="2.5" fill="#000" opacity="0.06"/><line x1="1130.8" y1="52.3" x2="1136" y2="57.2" stroke="#6a6a6a" stroke-width="4.4" stroke-linecap="round"/><line x1="1131.2" y1="52.2" x2="1135.6" y2="56.4" stroke="#9a9a9a" stroke-width="1.2" stroke-linecap="round"/><circle cx="1120" cy="42" r="10.6" fill="#f4f4ee" stroke="#b8b8b0" stroke-width="1.3"/><circle cx="1120" cy="42" r="9.4" fill="url(#gLensTop)"/><path d="M1113.5,42 L1119.5,36.5 V39.8 H1127.5 V44.2 H1119.5 V47.5 Z" fill="#fff" stroke="#3a6ab8" stroke-width="0.7"/><rect x="1154.5" y="30.5" width="27" height="18" rx="1.5" fill="#fff" stroke="#6a90cc" stroke-width="1.1"/><line x1="1177" y1="52.6" x2="1181.4" y2="57.2" stroke="#6a6a6a" stroke-width="4.2" stroke-linecap="round"/><circle cx="1168.4" cy="44.6" r="9.6" fill="#f4f4ee" stroke="#b8b8b0" stroke-width="1.2"/><circle cx="1168.4" cy="44.6" r="8" fill="url(#gLensTop)"/><ellipse cx="1217.1" cy="56.1" rx="10" ry="2.5" fill="#000" opacity="0.06"/><line x1="1223.8999999999999" y1="53.400000000000006" x2="1229.1" y2="58.3" stroke="#6a6a6a" stroke-width="4.4" stroke-linecap="round"/><line x1="1224.3" y1="53.3" x2="1228.6999999999998" y2="57.5" stroke="#9a9a9a" stroke-width="1.2" stroke-linecap="round"/><circle cx="1213.1" cy="43.1" r="10.6" fill="#f4f4ee" stroke="#b8b8b0" stroke-width="1.3"/><circle cx="1213.1" cy="43.1" r="9.4" fill="url(#gLensTop)"/><path d="M1213.1,30.5 L1217,35 H1214.6 V41.6 H1221.2 V39.2 L1225.7,43.1 L1221.2,47 V44.6 H1214.6 V51.2 H1217 L1213.1,55.7 L1209.2,51.2 H1211.6 V44.6 H1205 V47 L1200.5,43.1 L1205,39.2 V41.6 H1211.6 V35 H1209.2 Z" fill="#fff" stroke="#3a78d8" stroke-width="0.9"/><path d="M31.00,79.00 L31.00,92.94 L34.28,89.82 L36.74,95.24 L38.87,94.25 L36.49,89.00 L40.68,89.00 Z" fill="#fff" stroke="#111" stroke-width="1.0" stroke-linejoin="round"/><path d="M8.3,131.5h6.4M11.5,128.3v6.4" stroke="#000" stroke-width="1"/><path d="M22.2,140.3h6.4M25.4,137.10000000000002v6.4" stroke="#000" stroke-width="1"/><path d="M9.2,146.5h6.4M12.4,143.3v6.4" stroke="#000" stroke-width="1"/><path d="M31,147.4 V152 H26.4 Z" fill="#000"/><line x1="41.8" y1="144.7" x2="64.8" y2="134.1" stroke="#111" stroke-width="1"/><path d="M66,147.4 V152 H61.4 Z" fill="#000"/><path d="M7.7,183.1 A19.6,19.6 0 0 1 27.3,163.5" fill="none" stroke="#222" stroke-width="1"/><path d="M31,182.4 V187 H26.4 Z" fill="#000"/><circle cx="52.5" cy="173.3" r="10" fill="none" stroke="#222" stroke-width="1"/><path d="M66,182.4 V187 H61.4 Z" fill="#000"/><ellipse cx="17.9" cy="208.9" rx="13.2" ry="5.6" transform="rotate(-42 17.9 208.9)" fill="none" stroke="#222" stroke-width="1"/><path d="M31,217.4 V222 H26.4 Z" fill="#000"/><path d="M55.5,207 C51,203 46,199 43,200 C40,201.5 45,216 48.6,218 C51.5,219.5 54,212 55.5,207 C57,203 58.5,198.5 60.5,199.5 C63,200.8 65.5,210.5 63.5,211 C61,211.5 58,209 55.5,207 Z" fill="none" stroke="#222" stroke-width="1"/><path d="M66,217.4 V222 H61.4 Z" fill="#000"/><path d="M13.2,239 C10,239.5 8.1,241.3 8.1,243.5 C8.1,246 10,248 12.8,248 H27.7" fill="none" stroke="#333" stroke-width="1.1"/><path d="M31,252.4 V257 H26.4 Z" fill="#000"/><path d="M40.2,238.2 L43.8,232 H51.2 L54.8,238.2 L51.2,244.4 H43.8 L40.2,238.2 Z" fill="none" stroke="#222" stroke-width="1"/><path d="M60.6,236.5 L65.7,245.3 H55.5 Z" fill="none" stroke="#222" stroke-width="1"/><rect x="41.4" y="248.4" width="14.5" height="7.3" fill="none" stroke="#222" stroke-width="1"/><path d="M66,252.4 V257 H61.4 Z" fill="#000"/><path d="M7.8,278.3 L13.8,272.3 H28.4 V286.4 H7.8 Z" fill="url(#hatch)" stroke="#222" stroke-width="1.1"/><circle cx="20.6" cy="279.6" r="3.4" fill="#f2f2f2" stroke="#222" stroke-width="1"/><path d="M31,287.4 V292 H26.4 Z" fill="#000"/><text x="18" y="331.7" text-anchor="middle" font-family="Liberation Serif" font-size="27" fill="#000">A</text><path d="M43.7,314.2 V329.5 M61.7,314.2 V329.5 M44.5,316.4 H61" stroke="#222" stroke-width="1"/><path d="M44,316.4 l3,-1.8 v3.6 Z M61.4,316.4 l-3,-1.8 v3.6 Z" fill="#222"/><path d="M66,331.4 V336 H61.4 Z" fill="#000"/><rect x="7.5" y="348.8" width="21.3" height="16.2" fill="#fff" stroke="#111" stroke-width="1.5"/><path d="M10,362.8 V357.5 L12.6,355.2 L15,357.8 L19,353.8 L24.6,358.5 L26.2,360.5 V362.8 Z" fill="#000"/><circle cx="24.5" cy="352.5" r="1.5" fill="#000"/><path d="M5,393.2 L5,412.7 L23.8,412.7 Z" fill="#fff" stroke="#111" stroke-width="1.2" stroke-linejoin="round"/><path d="M9.2,403.2 L9.2,409 L15,409 Z" fill="#f0f0f0" stroke="#111" stroke-width="1"/><path d="M10.2,389 L12,387.6 L20.4,396.4 L19.8,398.4 L17.8,397.8 Z" fill="#d82020" stroke="#702010" stroke-width="0.6"/><path d="M26.4,387.4 L23.2,404.8 M26.4,387.4 L29.4,404.8 M25.4,393 h2" stroke="#111" stroke-width="1.1"/><path d="M31,408.4 V413 H26.4 Z" fill="#000"/><rect x="41.5" y="395.5" width="22.5" height="8.5" rx="1.5" fill="#fff" stroke="#333" stroke-width="1"/><path d="M44,396v2.5M46,396v1.5M48,396v1.5M50,396v1.5M52,396v2.8M54,396v1.5M56,396v1.5M58,396v1.5M60,396v2.5" stroke="#333" stroke-width="0.8"/><rect x="7.9" y="425.4" width="16.7" height="11.8" fill="#f0ead4" stroke="#888" stroke-width="0.9"/><circle cx="22.4" cy="437.2" r="7.2" fill="#f0ead4" fill-opacity="0.55" stroke="#999" stroke-width="0.9"/><circle cx="7.9" cy="438" r="1.2" fill="#f05050"/><line x1="41.9" y1="433.6" x2="58.5" y2="424" stroke="#ff2020" stroke-width="1.1"/><path d="M51.30,429.30 L51.30,440.86 L54.02,438.28 L56.06,442.76 L57.83,441.95 L55.86,437.60 L59.32,437.60 Z" fill="#fff" stroke="#111" stroke-width="0.9" stroke-linejoin="round"/><path d="M66,443.4 V448 H61.4 Z" fill="#000"/><path d="M7.5,475 L19.5,467.2 L28.8,472 L28.8,481.5 L16.5,488.5 L7.5,484 Z M7.5,475 L16.5,479.8 L28.8,472 M16.5,479.8 V488.5" fill="none" stroke="#222" stroke-width="1" stroke-linejoin="round"/><path d="M31,486.4 V491 H26.4 Z" fill="#000"/><path d="M1177.4,142.6 C1180.2,135.4 1189.6000000000001,135.4 1192.4,142.6 C1189.6000000000001,149.4 1180.2,149.4 1177.4,142.6 Z" fill="#000"/><path d="M1179.3,143.1 C1181.3,138.4 1188.5,138.4 1190.5,143.1 C1188.5,146.8 1181.3,146.8 1179.3,143.1 Z" fill="#fff"/><circle cx="1184.9" cy="143.2" r="3" fill="#000"/><circle cx="1184.6000000000001" cy="142.2" r="0.7" fill="#fff" opacity="0.7"/><path d="M1237.7,142.6 C1240.5,135.4 1249.9,135.4 1252.7,142.6 C1249.9,149.4 1240.5,149.4 1237.7,142.6 Z" fill="#a6a6a6"/><path d="M1239.6,143.1 C1241.6,138.4 1248.8,138.4 1250.8,143.1 C1248.8,146.8 1241.6,146.8 1239.6,143.1 Z" fill="#fff"/><circle cx="1245.2" cy="143.2" r="3" fill="#a6a6a6"/><circle cx="1244.9" cy="142.2" r="0.7" fill="#fff" opacity="0.7"/><path d="M1299,141.5 h4.2 v-4.2 h3.6 v4.2 h4.2 v3.6 h-4.2 v4.2 h-3.6 v-4.2 h-4.2 Z" fill="#ee0000" stroke="#800" stroke-width="0.4"/><rect x="1359.2" y="141" width="11.8" height="3.8" fill="#ee0000" stroke="#800" stroke-width="0.4"/><path d="M1418.40,149.60 L1422.14,148.24 L1431.66,138.66 L1429.24,136.26 L1419.73,145.85 Z" fill="#f2b43a" stroke="#8a5a18" stroke-width="0.7" stroke-linejoin="round"/><path d="M1431.52,138.80 L1433.21,137.10 L1430.79,134.70 L1429.10,136.41 Z" fill="#e82828" stroke="#8a2a18" stroke-width="0.6"/><path d="M1418.40,149.60 L1420.09,149.03 L1418.96,147.90 Z" fill="#333"/><path d="M1394.60,172.80 L1398.40,171.62 L1407.13,163.64 L1404.83,161.13 L1396.11,169.12 Z" fill="#f2b43a" stroke="#8a5a18" stroke-width="0.7" stroke-linejoin="round"/><path d="M1406.98,163.77 L1408.75,162.15 L1406.45,159.65 L1404.68,161.27 Z" fill="#e82828" stroke="#8a2a18" stroke-width="0.6"/><path d="M1394.60,172.80 L1396.32,172.31 L1395.24,171.13 Z" fill="#333"/><path d="M1415.7,167.9 C1418.5,160.70000000000002 1427.9,160.70000000000002 1430.7,167.9 C1427.9,174.70000000000002 1418.5,174.70000000000002 1415.7,167.9 Z" fill="#000"/><path d="M1417.6,168.4 C1419.6,163.70000000000002 1426.8,163.70000000000002 1428.8,168.4 C1426.8,172.10000000000002 1419.6,172.10000000000002 1417.6,168.4 Z" fill="#fff"/><circle cx="1423.2" cy="168.5" r="3" fill="#000"/><circle cx="1422.9" cy="167.5" r="0.7" fill="#fff" opacity="0.7"/><path d="M1442,166.5 v-2.5 a3,3 0 0 1 6,0 v2.5" fill="none" stroke="#bdbdbd" stroke-width="1.6"/><rect x="1440.3" y="166.2" width="9.6" height="7.4" rx="0.8" fill="#bdbdbd"/><rect x="1463.5" y="127.5" width="27" height="27" fill="#fff" stroke="#444" stroke-width="1"/><rect x="1463" y="127" width="28" height="5" fill="#000"/><rect x="1464.6" y="128" width="3" height="3" fill="#fff"/><path d="M1470,141 l8,-5 v9 l-8,5 Z" fill="#9a9a9a" stroke="#555" stroke-width="0.8"/><path d="M1473,141 l8,-5 v9 l-8,5 Z" fill="#f6f6f6" stroke="#666" stroke-width="0.8"/><path d="M1475,147 l4,-8 l1,5 Z" fill="none" stroke="#ee3030" stroke-width="0.9"/><rect x="1463.5" y="175.5" width="27" height="27" fill="#fff" stroke="#444" stroke-width="1"/><rect x="1463" y="175" width="28" height="5" fill="#000"/><rect x="1464.6" y="176" width="3" height="3" fill="#fff"/><rect x="1471" y="185" width="10" height="8" fill="#f2e6b0" stroke="#666" stroke-width="0.8"/><circle cx="1478.5" cy="192.5" r="4.6" fill="#f2e6b0" fill-opacity="0.85" stroke="#666" stroke-width="0.8"/><rect x="1463.5" y="221.5" width="27" height="27" fill="#fff" stroke="#444" stroke-width="1"/><rect x="1463" y="221" width="28" height="5" fill="#000"/><rect x="1464.6" y="222" width="3" height="3" fill="#fff"/><rect x="1469" y="231.5" width="16" height="11" rx="2.5" fill="#f4f4f2" stroke="#b8cce4" stroke-width="0.9"/><rect x="1463.5" y="277.5" width="27" height="27" fill="#fff" stroke="#444" stroke-width="1"/><rect x="1463" y="277" width="28" height="5" fill="#000"/><rect x="1464.6" y="278" width="3" height="3" fill="#fff"/><rect x="1467" y="288" width="3.6" height="3" fill="#000"/><rect x="1472.5" y="288" width="13" height="3" fill="#fff" stroke="#444" stroke-width="0.7"/><rect x="1467" y="293" width="3.6" height="3" fill="#000"/><rect x="1472.5" y="293" width="13" height="3" fill="#fff" stroke="#444" stroke-width="0.7"/><rect x="1467" y="298" width="3.6" height="3" fill="#000"/><rect x="1472.5" y="298" width="13" height="3" fill="#fff" stroke="#444" stroke-width="0.7"/><rect x="1463.5" y="322.5" width="27" height="27" fill="#fff" stroke="#444" stroke-width="1"/><rect x="1463" y="322" width="28" height="5" fill="#000"/><rect x="1464.6" y="323" width="3" height="3" fill="#fff"/><path d="M1470.5,333 h13 l-4.5,6 v6 l-3,-1.5 v-4.5 Z" fill="#b8b8b8" stroke="#777" stroke-width="0.8"/><rect x="1463.5" y="368.5" width="27" height="27" fill="#fff" stroke="#444" stroke-width="1"/><rect x="1463" y="368" width="28" height="5" fill="#000"/><rect x="1464.6" y="369" width="3" height="3" fill="#fff"/><path d="M1469,378 l6,3 v6 l-6,3 Z" fill="#fff" stroke="#555" stroke-width="0.8"/><rect x="1475" y="380.5" width="8" height="7" rx="1" fill="#8a8a8a" stroke="#555" stroke-width="0.6"/><path d="M1467,384 h20" stroke="#f08080" stroke-width="0.6" stroke-dasharray="1.5 1"/><rect x="1463.5" y="424.5" width="27" height="27" fill="#fff" stroke="#444" stroke-width="1"/><rect x="1463" y="424" width="28" height="5" fill="#000"/><rect x="1464.6" y="425" width="3" height="3" fill="#fff"/><path d="M1467,434.0 h14" stroke="#999" stroke-width="0.8"/><path d="M1467,437.2 h16" stroke="#999" stroke-width="0.8"/><path d="M1467,440.4 h14" stroke="#999" stroke-width="0.8"/><path d="M1467,443.6 h16" stroke="#999" stroke-width="0.8"/><path d="M1464,447 h26" stroke="#444" stroke-width="0.6"/><path d="M1467,449.5 h2 M1472,449.5 h14" stroke="#666" stroke-width="1"/><rect x="1463.5" y="471.5" width="27" height="27" fill="#fff" stroke="#444" stroke-width="1"/><rect x="1463" y="471" width="28" height="5" fill="#000"/><rect x="1464.6" y="472" width="3" height="3" fill="#fff"/><rect x="1471" y="481" width="12" height="13" rx="1" fill="#c88a22"/><rect x="1472.5" y="482.5" width="9" height="10" fill="#fafafa"/><rect x="1474" y="479.5" width="6" height="3" rx="1" fill="#999"/><path d="M1474,485.5h6M1474,487.5h6M1474,489.5h5" stroke="#ccc" stroke-width="0.8"/></svg>
</div></body></html>
